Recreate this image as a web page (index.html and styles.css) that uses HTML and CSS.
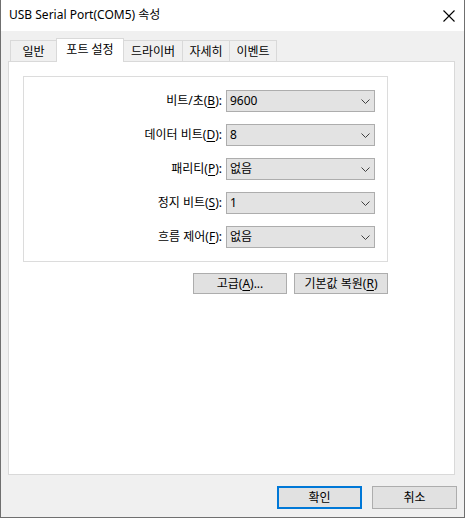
FILE: index.html
```html
<!DOCTYPE html>
<html lang="ko">
<head>
<meta charset="utf-8">
<title>USB Serial Port(COM5) 속성</title>
<link rel="stylesheet" href="styles.css">
</head>
<body>
<div class="window">
  <div class="titlebar">
    <span class="title">USB Serial Port(COM5) 속성</span>
    <svg class="close" width="12" height="12" viewBox="0 0 12 12"><path d="M0.5 0.5 L11.5 11.5 M11.5 0.5 L0.5 11.5" stroke="#000" stroke-width="1.1" fill="none"/></svg>
  </div>
  <div class="content">
    <div class="tabs">
      <div class="tab t1">일반</div>
      <div class="tab t2 active">포트 설정</div>
      <div class="tab t3">드라이버</div>
      <div class="tab t4">자세히</div>
      <div class="tab t5">이벤트</div>
    </div>
    <div class="panel">
      <div class="group">
        <div class="row">
          <span class="label">비트/초(<u>B</u>):</span>
          <div class="combo"><span class="value">9600</span><svg class="chev" width="9" height="5" viewBox="0 0 9 5"><path d="M0.5 0.5 L4.5 4.5 L8.5 0.5" stroke="#404040" fill="none"/></svg></div>
        </div>
        <div class="row">
          <span class="label">데이터 비트(<u>D</u>):</span>
          <div class="combo"><span class="value">8</span><svg class="chev" width="9" height="5" viewBox="0 0 9 5"><path d="M0.5 0.5 L4.5 4.5 L8.5 0.5" stroke="#404040" fill="none"/></svg></div>
        </div>
        <div class="row">
          <span class="label">패리티(<u>P</u>):</span>
          <div class="combo"><span class="value">없음</span><svg class="chev" width="9" height="5" viewBox="0 0 9 5"><path d="M0.5 0.5 L4.5 4.5 L8.5 0.5" stroke="#404040" fill="none"/></svg></div>
        </div>
        <div class="row">
          <span class="label">정지 비트(<u>S</u>):</span>
          <div class="combo"><span class="value">1</span><svg class="chev" width="9" height="5" viewBox="0 0 9 5"><path d="M0.5 0.5 L4.5 4.5 L8.5 0.5" stroke="#404040" fill="none"/></svg></div>
        </div>
        <div class="row">
          <span class="label">흐름 제어(<u>F</u>):</span>
          <div class="combo"><span class="value">없음</span><svg class="chev" width="9" height="5" viewBox="0 0 9 5"><path d="M0.5 0.5 L4.5 4.5 L8.5 0.5" stroke="#404040" fill="none"/></svg></div>
        </div>
      </div>
      <div class="actions">
        <button class="btn small">고급(<u>A</u>)...</button>
        <button class="btn small">기본값 복원(<u>R</u>)</button>
      </div>
    </div>
    <div class="footer">
      <button class="btn big primary">확인</button>
      <button class="btn big">취소</button>
    </div>
  </div>
</div>
</body>
</html>
```

FILE: styles.css
```css
* { box-sizing: border-box; }
html, body { margin: 0; padding: 0; background: #ffffff; }
body {
  font-family: "Noto Sans", "Noto Sans CJK KR", sans-serif;
  font-size: 12px;
  color: #000;
}
.window {
  width: 465px;
  height: 518px;
  border: 1px solid #6f6f6f;
  border-top: none;
  display: flex;
  flex-direction: column;
  background: #f0f0f0;
}
.titlebar {
  height: 31px;
  background: #ffffff;
  display: flex;
  align-items: center;
  justify-content: space-between;
  padding: 0 9px 1px 8px;
}
.title { font-size: 12px; line-height: 16px; }
.close { margin-right: 0; margin-top: 1px; }
.content {
  flex: 1;
  padding: 7px 7px 0 7px;
  display: flex;
  flex-direction: column;
}
.tabs {
  display: flex;
  align-items: flex-end;
  height: 23px;
  padding-left: 2px;
}
.tab {
  height: 21px;
  border: 1px solid #d9d9d9;
  border-bottom: none;
  background: #f0f0f0;
  display: flex;
  align-items: center;
  justify-content: center;
  line-height: 16px;
  padding-top: 1px;
  margin-left: -1px;
}
.t1 { width: 47px; margin-left: 0; }
.t2 { width: 68px; }
.t3 { width: 60px; }
.t4 { width: 48px; }
.t5 { width: 48px; }
.tab.active {
  height: 24px;
  background: #ffffff;
  margin-bottom: -1px;
  position: relative;
  z-index: 1;
  padding-top: 0;
  padding-bottom: 2px;
}
.panel {
  width: 447px;
  height: 414px;
  border: 1px solid #d9d9d9;
  background: #ffffff;
  padding: 14px 0 0 14px;
}
.group {
  width: 365px;
  height: 186px;
  border: 1px solid #dcdcdc;
  padding: 13px 12px 0 0;
  display: flex;
  flex-direction: column;
  gap: 12px;
}
.row {
  display: grid;
  grid-template-columns: 198px 149px;
  column-gap: 4px;
  align-items: center;
}
.label {
  text-align: right;
  line-height: 16px;
}
u { text-decoration: underline; text-underline-offset: 2px; }
.combo {
  height: 22px;
  background: #e3e3e3;
  border: 1px solid #adadad;
  display: flex;
  align-items: center;
  justify-content: space-between;
  padding: 0 4px 0 3px;
  line-height: 16px;
}
.chev { margin-top: 1px; }
.actions {
  width: 365px;
  margin-top: 11px;
  display: flex;
  justify-content: flex-end;
  gap: 7px;
}
.btn {
  font-family: inherit;
  font-size: 12px;
  color: #000;
  background: #e1e1e1;
  border: 1px solid #adadad;
  padding: 0;
  line-height: 16px;
  display: flex;
  align-items: center;
  justify-content: center;
}
.btn.small { width: 94px; height: 21px; }
.footer {
  margin-top: 11px;
  display: flex;
  justify-content: flex-end;
  gap: 10px;
  padding-right: 0;
}
.btn.big { width: 85px; height: 23px; }
.btn.primary { border: 2px solid #0078d7; }
```
